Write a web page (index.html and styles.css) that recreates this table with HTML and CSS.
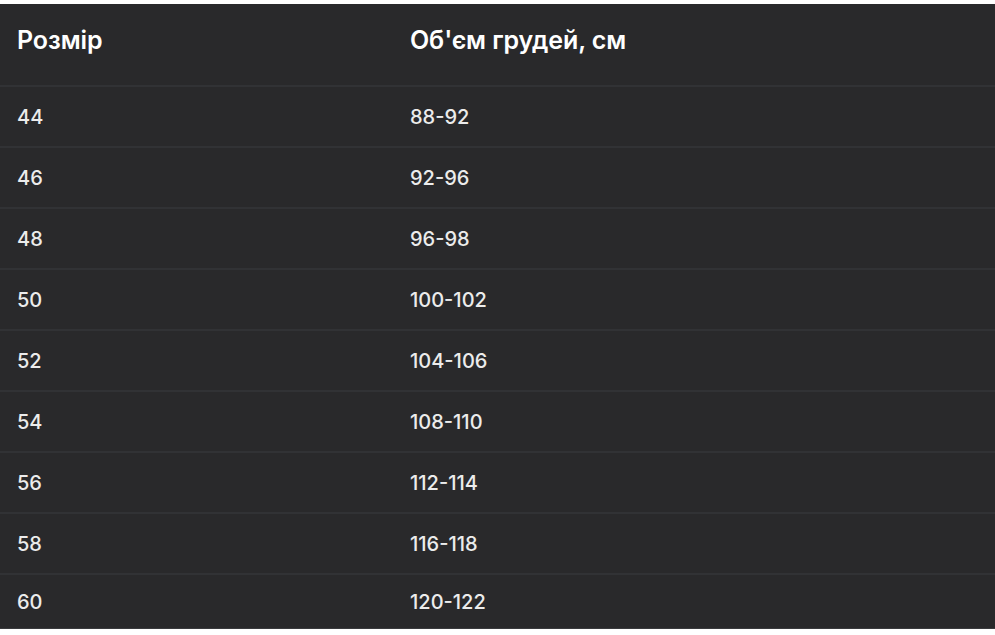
FILE: index.html
```html
<!DOCTYPE html>
<html lang="uk">
<head>
<meta charset="utf-8">
<link rel="stylesheet" href="styles.css">
</head>
<body>
<div class="wrap">
<table class="sizes">
<thead>
<tr><th class="c1">Розмір</th><th class="c2">Об'єм грудей, см</th></tr>
</thead>
<tbody>
<tr><td class="c1">44</td><td class="c2">88-92</td></tr>
<tr><td class="c1">46</td><td class="c2">92-96</td></tr>
<tr><td class="c1">48</td><td class="c2">96-98</td></tr>
<tr><td class="c1">50</td><td class="c2">100-102</td></tr>
<tr><td class="c1">52</td><td class="c2">104-106</td></tr>
<tr><td class="c1">54</td><td class="c2">108-110</td></tr>
<tr><td class="c1">56</td><td class="c2">112-114</td></tr>
<tr><td class="c1">58</td><td class="c2">116-118</td></tr>
<tr class="last"><td class="c1">60</td><td class="c2">120-122</td></tr>
</tbody>
</table>
</div>
</body>
</html>
```
FILE: styles.css
```css
html, body {
  margin: 0;
  padding: 0;
  background: #ffffff;
}
.wrap {
  padding-top: 4px;
  padding-bottom: 7px;
}
.sizes {
  width: 100%;
  border-collapse: collapse;
  background: #29292b;
  font-family: Inter, "Noto Sans", sans-serif;
  color: #ececec;
}
.sizes th {
  height: 82px;
  box-sizing: border-box;
  text-align: left;
  font-weight: 600;
  font-size: 25px;
  line-height: 30px;
  letter-spacing: -0.1px;
  color: #ffffff;
  border-bottom: 2px solid #313235;
  padding: 0 0 10px 0;
}
.sizes td {
  height: 59px;
  font-size: 20px;
  font-weight: 500;
  border-bottom: 2px solid #313235;
  padding: 0;
}
.sizes tr.last td {
  height: 53px;
  border-bottom: 1px solid #3a3b3e;
}
.c1 {
  width: 393px;
  padding-left: 17px !important;
}
.c2 {
  padding-left: 0;
}
```
